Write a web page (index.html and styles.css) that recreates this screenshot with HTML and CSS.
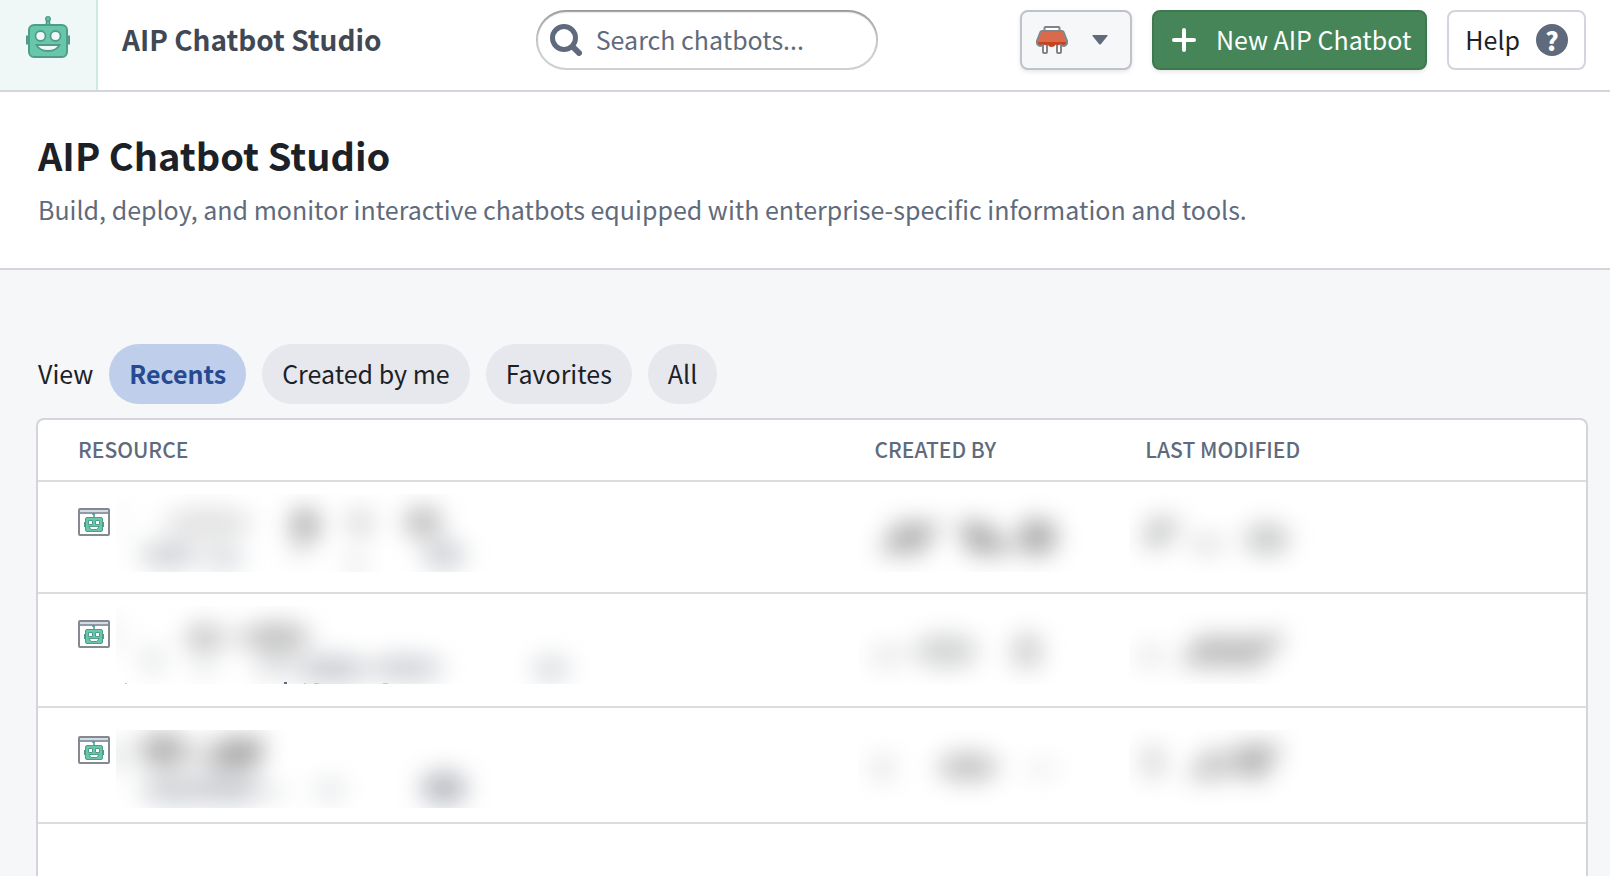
FILE: index.html
```html
<!DOCTYPE html>
<html lang="en">
<head>
    <meta charset="UTF-8">
    <meta name="viewport" content="width=device-width, initial-scale=1.0">
    <title>AIP Chatbot Studio</title>
    <link rel="stylesheet" href="styles.css">
</head>
<body>
    <!-- Shared shapes -->
    <svg class="defs" width="0" height="0" aria-hidden="true">
        <defs>
            <filter id="soft" x="-100%" y="-100%" width="300%" height="300%" color-interpolation-filters="sRGB">
                <feGaussianBlur stdDeviation="12"/>
            </filter>
            <symbol id="robot" viewBox="0 0 44 42">
                <path d="M20 8l1-3h2l1 3" fill="#68c6aa" stroke="#4f9d88" stroke-width="1.5"/>
                <circle cx="22" cy="3" r="2.2" fill="#68c6aa" stroke="#4f9d88" stroke-width="1.5"/>
                <path d="M1 20.5h3v7H1zM40 20.5h3v7h-3z" fill="#68c6aa" stroke="#4f9d88" stroke-width="2"/>
                <rect x="3" y="9" width="38" height="32" rx="5" fill="#68c6aa" stroke="#4f9d88" stroke-width="2"/>
                <circle cx="14.5" cy="20" r="5" fill="#eff8f7" stroke="#4f9d88" stroke-width="1.8"/>
                <circle cx="29.5" cy="20" r="5" fill="#eff8f7" stroke="#4f9d88" stroke-width="1.8"/>
                <path d="M10.5 29h23c-2 3.8-6 6-11.5 6s-9.5-2.2-11.5-6z" fill="#eff8f7" stroke="#4f9d88" stroke-width="1.8"/>
            </symbol>
            <symbol id="resource" viewBox="0 0 32 28">
                <rect x="1" y="1" width="30" height="26" rx="1" fill="#ffffff" stroke="#85888e" stroke-width="2"/>
                <path d="M2 2h28v2H2z" fill="#d3dbe5"/>
                <path d="M2 4h28v2H2z" fill="#8f9baa"/>
                <path d="M16 10V6m-2 0h3" stroke="#4f9d88" stroke-width="1.5"/>
                <path d="M6 14h2v5H6zM24 14h2v5h-2z" fill="#4f9d88"/>
                <rect x="7.5" y="9.5" width="17" height="14" rx="1.5" fill="#68c6aa" stroke="#4f9d88"/>
                <path d="M10.5 12.5h4v4h-4zM17.5 12.5h4v4h-4z" fill="#ffffff" stroke="#4f9d88"/>
                <path d="M11 18.5h10l-2 3h-6z" fill="#ffffff" stroke="#4f9d88"/>
            </symbol>
        </defs>
    </svg>

    <header class="topbar">
        <div class="app-logo">
            <svg width="44" height="42" aria-hidden="true"><use href="#robot"/></svg>
        </div>
        <div class="topbar-content">
            <div class="app-name">AIP Chatbot Studio</div>
            <label class="search">
                <svg width="32" height="32" viewBox="0 0 32 32" aria-hidden="true">
                    <circle cx="14" cy="14" r="11.5" fill="none" stroke="#5f6b7c" stroke-width="5"/>
                    <path d="M23.5 23.5l5.5 5.5" stroke="#5f6b7c" stroke-width="6" stroke-linecap="round"/>
                </svg>
                <input type="text" placeholder="Search chatbots..." aria-label="Search chatbots">
            </label>
            <div class="actions">
                <button type="button" class="btn btn-picker" aria-haspopup="menu" aria-label="Choose workspace">
                    <svg width="32" height="28" viewBox="0 0 32 28" aria-hidden="true">
                        <path d="M7 17v9q0 1 1 1h2q1 0 1-1v-9M21 17v9q0 1 1 1h2q1 0 1-1v-9" fill="#ffffff" stroke="#818589" stroke-width="2"/>
                        <path d="M8.5 5V2q0-1 1-1h13q1 0 1 1v3" fill="#ffffff" stroke="#818589" stroke-width="2"/>
                        <path d="M5.5 5h21L31 16H1z" fill="#d96b4c"/>
                        <path d="M1 16h30q0 3-3 4-2 0-4-1.5-2 1.5-4 0-2 2.5-4.5 2.5t-4-2.5Q9 20 7.5 18.5 6 20 4 20q-3-1-3-4z" fill="#c7431f"/>
                        <path d="M6 5h20q1 0 1.5 1L31 15q.5 4-3 5-2 0-4-1.5M4 20q-3.5-1-3-5L4.5 6Q5 5 6 5M4 20q2 0 3.5-1.5" fill="none" stroke="#818589" stroke-width="2"/>
                    </svg>
                    <svg width="16" height="10" viewBox="0 0 16 10" aria-hidden="true"><path d="M1 0h14q1 0 .5 1L9 9q-1 1-2 0L.5 1Q0 0 1 0z" fill="#5f6b7c"/></svg>
                </button>
                <button type="button" class="btn btn-new">
                    <svg width="24" height="24" viewBox="0 0 24 24" aria-hidden="true"><path d="M12 2v20M2 12h20" stroke="#ffffff" stroke-width="4" stroke-linecap="round"/></svg>
                    <span class="label">New AIP Chatbot</span>
                </button>
                <button type="button" class="btn btn-help"><span class="label">Help</span> <span class="help-mark">?</span></button>
            </div>
        </div>
    </header>

    <section class="intro">
        <h1>AIP Chatbot Studio</h1>
        <p>Build, deploy, and monitor interactive chatbots equipped with enterprise-specific information and tools.</p>
    </section>

    <main>
        <div class="filters">
            <span class="label">View</span>
            <button type="button" class="pill active" aria-pressed="true">Recents</button>
            <button type="button" class="pill">Created by me</button>
            <button type="button" class="pill">Favorites</button>
            <button type="button" class="pill">All</button>
        </div>

        <div class="table-card">
            <table>
                <thead>
                    <tr>
                        <th class="col-resource">RESOURCE</th>
                        <th class="col-author">CREATED BY</th>
                        <th class="col-date">LAST MODIFIED</th>
                    </tr>
                </thead>
                <tbody>
                    <tr>
                        <td class="col-resource">
                            <div class="resource">
                                <svg class="resource-icon" width="32" height="28" aria-hidden="true"><use href="#resource"/></svg>
                                <svg class="redacted" width="500" height="78" aria-hidden="true">
                                    <g filter="url(#soft)">
                                        <ellipse cx="6" cy="30" rx="10" ry="22" fill="#f1f4f3"/>
                                        <ellipse cx="92" cy="29" rx="46" ry="16" fill="#c6c6c6"/>
                                        <ellipse cx="189" cy="31" rx="16" ry="18" fill="#6c6c6c"/>
                                        <ellipse cx="244" cy="29" rx="14" ry="16" fill="#bababa"/>
                                        <ellipse cx="307" cy="28" rx="20" ry="16" fill="#828282"/>
                                        <ellipse cx="53" cy="61" rx="30" ry="13" fill="#a0a5ae"/>
                                        <ellipse cx="108" cy="64" rx="20" ry="13" fill="#b4bbc4"/>
                                        <ellipse cx="183" cy="58" rx="9" ry="8" fill="#c5c8c8"/>
                                        <ellipse cx="240" cy="71" rx="12" ry="8" fill="#c0c4c4"/>
                                        <ellipse cx="328" cy="61" rx="22" ry="14" fill="#9aa0aa"/>
                                    </g>
                                </svg>
                            </div>
                        </td>
                        <td class="col-author">
                            <svg class="redacted" width="230" height="78" aria-hidden="true">
                                <g filter="url(#soft)">
                                    <path d="M20 60l18-32h46l-20 32z" fill="#6a6a6a"/>
                                    <path d="M98 28h30l30 32h-46z" fill="#585858"/>
                                    <ellipse cx="179" cy="43" rx="21" ry="19" fill="#606060"/>
                                </g>
                            </svg>
                        </td>
                        <td class="col-date">
                            <svg class="redacted" width="230" height="78" aria-hidden="true">
                                <g filter="url(#soft)">
                                    <path d="M14 54l5-30h34l-18 30z" fill="#8e9090"/>
                                    <ellipse cx="78" cy="50" rx="20" ry="10" fill="#c4c4c4"/>
                                    <ellipse cx="138" cy="45" rx="23" ry="16" fill="#949696"/>
                                </g>
                            </svg>
                        </td>
                    </tr>
                    <tr>
                        <td class="col-resource">
                            <div class="resource">
                                <svg class="resource-icon" width="32" height="28" aria-hidden="true"><use href="#resource"/></svg>
                                <svg class="redacted" width="500" height="78" aria-hidden="true">
                                    <g filter="url(#soft)">
                                        <ellipse cx="0" cy="28" rx="7" ry="20" fill="#d8dedb"/>
                                        <ellipse cx="89" cy="32" rx="20" ry="15" fill="#909090"/>
                                        <ellipse cx="118" cy="32" rx="20" ry="10" fill="#cccccc"/>
                                        <ellipse cx="161" cy="31" rx="34" ry="15" fill="#868686"/>
                                        <ellipse cx="37" cy="54" rx="13" ry="16" fill="#d0d4d3"/>
                                        <ellipse cx="88" cy="62" rx="11" ry="10" fill="#d0d4d4"/>
                                        <ellipse cx="160" cy="60" rx="24" ry="12" fill="#c0c4ca"/>
                                        <ellipse cx="216" cy="63" rx="36" ry="14" fill="#979ca6"/>
                                        <ellipse cx="290" cy="62" rx="38" ry="13" fill="#a0a5ae"/>
                                        <ellipse cx="435" cy="63" rx="19" ry="13" fill="#b2b8c0"/>
                                    </g>
                                    <path d="M168 77h3" stroke="#5f6b7c" stroke-width="2"/>
                                    <path d="M9 77.5h2M188 77.5h2M198 77.5h5M267 77.5h5" stroke="#c5c9cf"/>
                                </svg>
                            </div>
                        </td>
                        <td class="col-author">
                            <svg class="redacted" width="230" height="78" aria-hidden="true">
                                <g filter="url(#soft)">
                                    <ellipse cx="29" cy="50" rx="17" ry="12" fill="#d0d0d0"/>
                                    <ellipse cx="88" cy="45" rx="33" ry="17" fill="#a8aaaa"/>
                                    <ellipse cx="169" cy="45" rx="16" ry="19" fill="#a4a4a4"/>
                                </g>
                            </svg>
                        </td>
                        <td class="col-date">
                            <svg class="redacted" width="230" height="78" aria-hidden="true">
                                <g filter="url(#soft)">
                                    <ellipse cx="22" cy="50" rx="14" ry="12" fill="#d0d0d0"/>
                                    <path d="M50 60l18-30h62l28-4-12 18-18 18z" fill="#808080"/>
                                </g>
                            </svg>
                        </td>
                    </tr>
                    <tr>
                        <td class="col-resource">
                            <div class="resource">
                                <svg class="resource-icon" width="32" height="28" aria-hidden="true"><use href="#resource"/></svg>
                                <svg class="redacted" width="500" height="78" aria-hidden="true">
                                    <g filter="url(#soft)">
                                        <ellipse cx="2" cy="26" rx="12" ry="18" fill="#ccd3d0"/>
                                        <ellipse cx="47" cy="20" rx="24" ry="18" fill="#6a6a6a"/>
                                        <ellipse cx="84" cy="24" rx="16" ry="14" fill="#bdbdbd"/>
                                        <path d="M94 38l10-30h46l-8 30z" fill="#505050"/>
                                        <ellipse cx="60" cy="60" rx="36" ry="15" fill="#a3a7b0"/>
                                        <ellipse cx="110" cy="59" rx="38" ry="15" fill="#9a9ea8"/>
                                        <ellipse cx="158" cy="62" rx="14" ry="8" fill="#d0d4d8"/>
                                        <ellipse cx="214" cy="60" rx="16" ry="13" fill="#d0d4d8"/>
                                        <ellipse cx="328" cy="58" rx="24" ry="17" fill="#747985"/>
                                    </g>
                                </svg>
                            </div>
                        </td>
                        <td class="col-author">
                            <svg class="redacted" width="230" height="78" aria-hidden="true">
                                <g filter="url(#soft)">
                                    <ellipse cx="25" cy="38" rx="12" ry="14" fill="#cccccc"/>
                                    <ellipse cx="110" cy="37" rx="31" ry="15" fill="#8c8c8c"/>
                                    <ellipse cx="184" cy="39" rx="18" ry="8" fill="#dcdcdc"/>
                                </g>
                            </svg>
                        </td>
                        <td class="col-date">
                            <svg class="redacted" width="230" height="78" aria-hidden="true">
                                <g filter="url(#soft)">
                                    <ellipse cx="24" cy="32" rx="12" ry="18" fill="#b4b4b4"/>
                                    <path d="M56 50l20-30h24l-4 30z" fill="#8e8e8e"/>
                                    <path d="M100 44l8-30h46l-20 36z" fill="#707070"/>
                                </g>
                            </svg>
                        </td>
                    </tr>
                </tbody>
            </table>
        </div>
    </main>
</body>
</html>
```
FILE: styles.css
```css
* {
    box-sizing: border-box;
}
body {
    margin: 0;
    min-height: 100vh;
    display: flex;
    flex-direction: column;
    font-family: "Noto Sans CJK SC", "Noto Sans", sans-serif;
    font-size: 25px;
    line-height: 36px;
    color: #1c2127;
    background-color: #f6f7f9;
}
button, input {
    font: inherit;
    color: inherit;
}
button {
    cursor: pointer;
}
svg {
    display: block;
    flex: none;
}
.defs {
    position: absolute;
}
.label {
    padding-bottom: 2px;
}

/* Top bar */
.topbar {
    display: flex;
    background: #ffffff;
    border-bottom: 2px solid #d3d6de;
}
.app-logo {
    width: 98px;
    padding: 16px 26px;
    background: #eff8f7;
    border-right: 2px solid #ccece1;
}
.topbar-content {
    flex: 1;
    display: flex;
    align-items: center;
    padding: 10px 24px 20px;
}
.app-name {
    margin-right: auto;
    padding: 0 12px 2px 0;
    font-size: 28px;
    font-weight: 600;
    color: #404854;
    white-space: nowrap;
}
.search {
    display: flex;
    align-items: center;
    gap: 14px;
    width: 342px;
    height: 60px;
    margin-right: auto;
    padding: 0 14px;
    border-radius: 30px;
    box-shadow: inset 0 0 0 2px rgba(17, 20, 24, 0.2), inset 0 2px 2px rgba(17, 20, 24, 0.3);
}
.search input {
    flex: 1;
    min-width: 0;
    padding: 0 0 2px;
    border: none;
    outline: none;
    background: none;
}
.search input::placeholder {
    color: #5f6b7c;
    opacity: 1;
}
.actions {
    display: flex;
    gap: 20px;
}
.btn {
    display: flex;
    align-items: center;
    height: 60px;
    border: 2px solid #d3d5dc;
    border-radius: 8px;
    background: #ffffff;
    white-space: nowrap;
}
.btn-picker {
    gap: 24px;
    padding: 0 22px 0 14px;
    background: #f6f7f9;
    border-color: #bfc2c8;
    box-shadow: 0 2px 4px rgba(17, 20, 24, 0.1);
}
.btn-new {
    gap: 20px;
    padding: 0 14px 0 18px;
    color: #ffffff;
    background: #458558;
    border-color: #3f7850;
    box-shadow: 0 2px 4px rgba(17, 20, 24, 0.1);
}
.btn-help {
    gap: 16px;
    padding: 0 16px;
}
.help-mark {
    width: 32px;
    height: 32px;
    border-radius: 50%;
    background: #5f6b7c;
    color: #ffffff;
    font-weight: 900;
    line-height: 32px;
    text-align: center;
}

/* Intro */
.intro {
    padding: 40px 38px;
    background: #ffffff;
    border-bottom: 2px solid #d3d5da;
}
.intro h1 {
    margin: 0 0 12px;
    font-size: 38px;
    font-weight: 600;
    line-height: 46px;
}
.intro p {
    margin: 0;
    color: #5f6b7c;
    line-height: 38px;
}

/* List */
main {
    flex: 1;
    display: flex;
    flex-direction: column;
    padding: 74px 22px 0 36px;
}
.filters {
    display: flex;
    align-items: center;
    gap: 16px;
    margin-bottom: 14px;
    padding-left: 2px;
}
.pill {
    height: 60px;
    padding: 0 20px 2px;
    border: none;
    border-radius: 30px;
    background: #e7e8ed;
}
.pill.active {
    background: #bfceeb;
    color: #254a91;
    font-weight: 700;
}
.table-card {
    flex: 1;
    background: #ffffff;
    border: 2px solid #d3d5da;
    border-bottom: none;
    border-radius: 8px 8px 0 0;
}
table {
    width: 100%;
    border-collapse: separate;
    border-spacing: 0;
    table-layout: fixed;
}
th {
    height: 62px;
    padding: 0 16px 2px;
    border-bottom: 2px solid #dcdcde;
    color: #5f6b7c;
    font-size: 21px;
    font-weight: 500;
    text-align: left;
}
td {
    height: 114px;
    padding: 12px 0 0;
    border-bottom: 2px solid #dcdcde;
    vertical-align: top;
}
.col-resource {
    width: 53%;
    padding-left: 40px;
}
.col-author {
    width: 17.5%;
}
.resource {
    display: flex;
    gap: 6px;
}
.resource-icon {
    margin-top: 14px;
}
.redacted g {
    opacity: 0.5;
}
tbody tr:first-child td {
    height: 112px;
}
tbody tr:last-child td {
    height: 116px;
    padding-top: 22px;
}
tbody tr:last-child .resource-icon {
    margin-top: 6px;
}
```
